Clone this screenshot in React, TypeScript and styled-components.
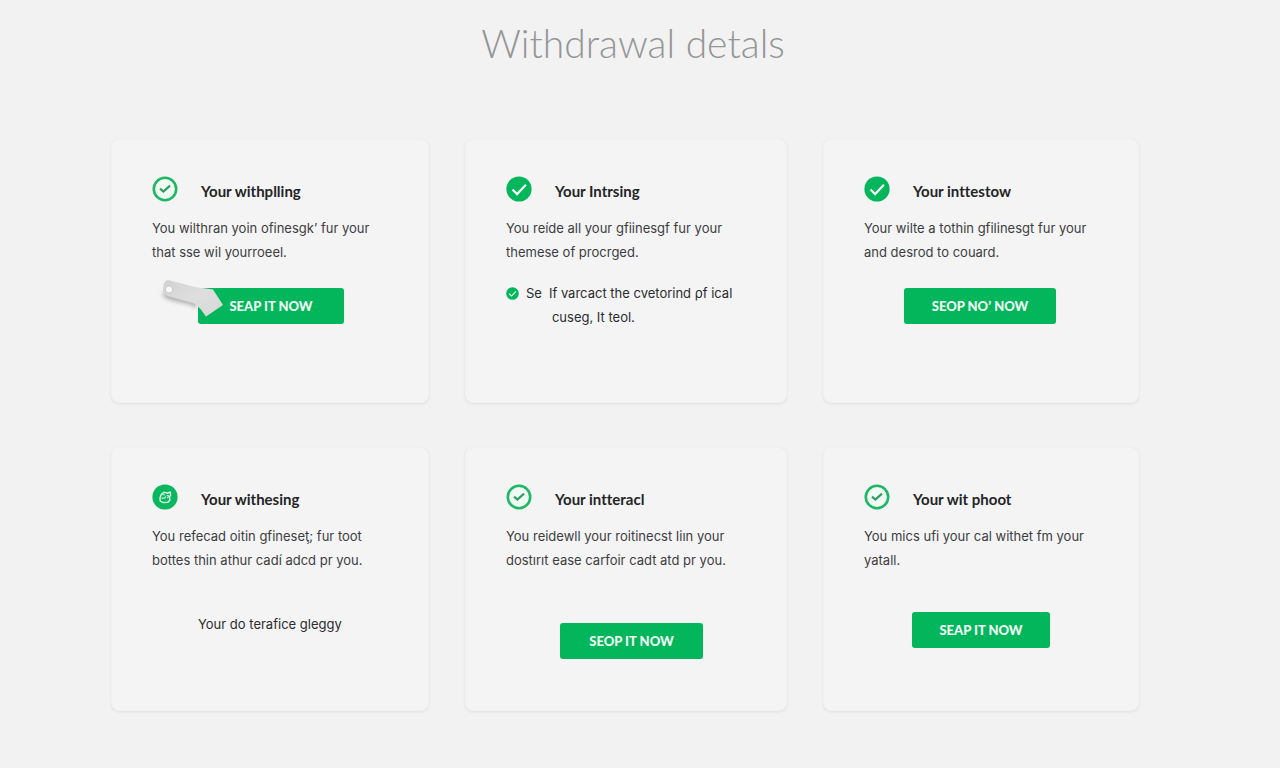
import React from 'react';
import styled, { createGlobalStyle } from 'styled-components';

const GlobalStyle = createGlobalStyle`
  *, *::before, *::after { box-sizing: border-box; }
  body {
    margin: 0;
    background: #f2f2f2;
    color: #3c3d3f;
    font-family: Inter, 'Noto Sans', sans-serif;
    font-variant-ligatures: none;
  }
`;

const Page = styled.main`
  padding: 15px 141px 56px 111px;
`;

const PageTitle = styled.h1`
  margin: 0 0 68px;
  padding-left: 16px;
  color: #949697;
  font-family: Lato, sans-serif;
  font-size: 39px;
  font-weight: 300;
  line-height: 56px;
  text-align: center;
`;

const CardGrid = styled.div`
  display: grid;
  grid-template-columns: 318fr 322fr 316fr;
  grid-auto-rows: minmax(264px, auto);
  gap: 44px 36px;
`;

const Card = styled.section`
  padding: 36px 40px;
  border: 1px solid #f1f1f1;
  border-radius: 8px;
  background: #f4f4f4;
  box-shadow: 0 1px 3px rgba(0, 0, 0, 0.08);
`;

const CardHead = styled.div`
  display: flex;
  align-items: flex-end;
  gap: 23px;
  margin-bottom: 14px;
`;

const CardTitle = styled.h2`
  margin: 0;
  color: #232426;
  font-family: Lato, sans-serif;
  font-size: 15px;
  font-weight: 700;
  line-height: 22px;
  white-space: nowrap;
`;

const CardText = styled.p`
  margin: 0;
  font-size: 13px;
  line-height: 24px;
  white-space: nowrap;
`;

const Action = styled.div<{ $gap: number; $indent: number }>`
  position: relative;
  width: fit-content;
  margin-top: ${(p) => p.$gap}px;
  margin-left: ${(p) => p.$indent}px;
`;

const ActionButton = styled.button<{ $width: number }>`
  display: block;
  width: ${(p) => p.$width}px;
  height: 36px;
  padding: 0;
  border: 0;
  border-radius: 3px;
  background: #04b65b;
  color: #effff5;
  font-family: Lato, sans-serif;
  font-size: 13px;
  font-weight: 900;
  line-height: 20px;
  text-align: center;
  white-space: nowrap;
  cursor: pointer;
`;

const Tag = styled.svg`
  position: absolute;
  top: -12px;
  left: -42px;
  overflow: visible;
`;

const Note = styled.div`
  display: flex;
  align-items: flex-start;
  gap: 7px;
  margin-top: 17px;
`;

const NoteIcon = styled.span`
  display: flex;
  align-items: center;
  height: 24px;
`;

const NoteText = styled(CardText)`
  color: #2b2c2e;
`;

const NoteLine = styled.span`
  display: block;
  padding-left: 3px;
`;

function CheckIcon({ filled = false, size = 26 }: { filled?: boolean; size?: number }) {
  return (
    <svg width={size} height={size} viewBox="0 0 26 26" fill="none" aria-hidden="true">
      {filled ? (
        <>
          <circle cx="13" cy="13" r="12.6" fill="#04b65b" />
          <path d="M6.5 13.5l4.6 4.6 8.8-9.3" stroke="#f1fff7" strokeWidth="2.2" />
        </>
      ) : (
        <>
          <circle cx="13" cy="13" r="11.2" fill="#effaf3" stroke="#1fb766" strokeWidth="2.6" />
          <path d="M8 12.6l3.4 3 6.6-6" stroke="#2f9c64" strokeWidth="2.1" />
        </>
      )}
    </svg>
  );
}

function BadgeIcon() {
  return (
    <svg width="26" height="26" viewBox="0 0 26 26" fill="none" aria-hidden="true">
      <circle cx="13" cy="13" r="12.6" fill="#0ab65e" />
      <path
        d="M14 8.2l1.3 1.2 3-1.4.3 3.4-1.1 1.4.4 3.2-2 2.3-4.7.3-3-1.6-.2-3.3 1.4-3.4 2.6-2 2 .6"
        stroke="#dcfbe8"
        strokeWidth="1.4"
        strokeLinejoin="round"
      />
      <path d="M9.5 13.7c2 1 3.6.6 4.3-1.2M14.6 11.2l2 .6-1.2 2.4M10.5 10.5l2.4.5" stroke="#c4f4d7" strokeWidth="1.2" />
    </svg>
  );
}

function PriceTag() {
  return (
    <Tag width="70" height="44" viewBox="0 0 70 44" aria-hidden="true">
      <defs>
        <linearGradient id="tagFill" x1="0" y1="0" x2="1" y2="1">
          <stop offset="0" stopColor="#d2d2d2" />
          <stop offset="0.5" stopColor="#dedede" />
          <stop offset="1" stopColor="#d8d8d8" />
        </linearGradient>
        <filter id="tagShadow" x="-20%" y="-20%" width="140%" height="160%">
          <feGaussianBlur stdDeviation="2" />
        </filter>
      </defs>
      <path d="M6 16l3 6c8 4 18 4 26 7l4 3 8-14z" fill="#777" opacity="0.55" filter="url(#tagShadow)" />
      <path
        d="M12 4L39 11L57 13.5L67 29L50 40.5C46 35 43 30 37 27L13 20.5Q6 18 7 11.5Q8 4 12 4Z"
        fill="url(#tagFill)"
      />
      <circle cx="13" cy="13.5" r="3.6" fill="#fafafa" stroke="#bcbcbc" strokeWidth="0.8" />
    </Tag>
  );
}

type CardData = {
  icon: React.ReactNode;
  title: string;
  lines: [string, string];
  content: React.ReactNode;
};

const cards: CardData[] = [
  {
    icon: <CheckIcon />,
    title: 'Your withplling',
    lines: ['You wilthran yoin ofinesgk’ fur your', 'that sse wil yourroeel.'],
    content: (
      <Action $gap={24} $indent={46}>
        <ActionButton type="button" $width={146}>SEAP IT NOW</ActionButton>
        <PriceTag />
      </Action>
    ),
  },
  {
    icon: <CheckIcon filled />,
    title: 'Your Intrsing',
    lines: ['You reíde all your gfiinesgf fur your', 'themese of procrged.'],
    content: (
      <Note>
        <NoteIcon>
          <CheckIcon filled size={13} />
        </NoteIcon>
        <NoteText as="span">Se</NoteText>
        <NoteText>
          If varcact the cvetorind ρf ical
          <NoteLine>cuseg, It teol.</NoteLine>
        </NoteText>
      </Note>
    ),
  },
  {
    icon: <CheckIcon filled />,
    title: 'Your inttestow',
    lines: ['Your wilte a tothin gfilinesgt fur your', 'and desrod to couard.'],
    content: (
      <Action $gap={24} $indent={40}>
        <ActionButton type="button" $width={152}>SEOP NO’ NOW</ActionButton>
      </Action>
    ),
  },
  {
    icon: <BadgeIcon />,
    title: 'Your withesing',
    lines: ['You refecad oitin gfineseţ; fur toot', 'bottes thin athur cadí adcd pr you.'],
    content: (
      <Action $gap={40} $indent={46}>
        <NoteText>Your do terafice gleggy</NoteText>
      </Action>
    ),
  },
  {
    icon: <CheckIcon />,
    title: 'Your intteracl',
    lines: ['You reidewll your roitinecst Iiın your', 'dostırıt ease carfoir cadt atd pr you.'],
    content: (
      <Action $gap={51} $indent={54}>
        <ActionButton type="button" $width={143}>SEOP IT NOW</ActionButton>
      </Action>
    ),
  },
  {
    icon: <CheckIcon />,
    title: 'Your wit phoot',
    lines: ['You mics ufi your cal withet fm your', 'yatall.'],
    content: (
      <Action $gap={40} $indent={48}>
        <ActionButton type="button" $width={138}>SEAP IT NOW</ActionButton>
      </Action>
    ),
  },
];

export default function App() {
  return (
    <>
      <GlobalStyle />
      <Page>
        <PageTitle>Withdrawal detals</PageTitle>
        <CardGrid>
          {cards.map((card) => (
            <Card key={card.title}>
              <CardHead>
                {card.icon}
                <CardTitle>{card.title}</CardTitle>
              </CardHead>
              <CardText>
                {card.lines[0]}
                <br />
                {card.lines[1]}
              </CardText>
              {card.content}
            </Card>
          ))}
        </CardGrid>
      </Page>
    </>
  );
}
